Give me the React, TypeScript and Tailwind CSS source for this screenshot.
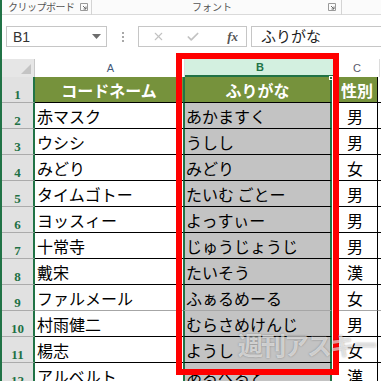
import { Check, X } from 'lucide-react';

type Row = { n: number; a: string; b: string; c: string; head?: boolean; softLine?: boolean };

const ROWS: Row[] = [
  { n: 1, a: 'コードネーム', b: 'ふりがな', c: '性別', head: true },
  { n: 2, a: '赤マスク', b: 'あかますく', c: '男' },
  { n: 3, a: 'ウシシ', b: 'うしし', c: '男' },
  { n: 4, a: 'みどり', b: 'みどり', c: '女' },
  { n: 5, a: 'タイムゴトー', b: 'たいむ ごとー', c: '男' },
  { n: 6, a: 'ヨッスィー', b: 'よっすぃー', c: '男' },
  { n: 7, a: '十常寺', b: 'じゅうじょうじ', c: '男' },
  { n: 8, a: '戴宋', b: 'たいそう', c: '漢' },
  { n: 9, a: 'ファルメール', b: 'ふぁるめーる', c: '女', softLine: true },
  { n: 10, a: '村雨健二', b: 'むらさめけんじ', c: '男' },
  { n: 11, a: '楊志', b: 'ようし', c: '女' },
  { n: 12, a: 'アルベルト', b: 'あるべると', c: '漢' },
];

const jp = "font-['Noto_Sans_CJK_JP','Noto_Sans',sans-serif]";

function Launcher() {
  return (
    <svg width="8" height="8" viewBox="0 0 8 8" className="shrink-0">
      <path d="M0.5 0.5h7v7h-7z" fill="none" stroke="#9a9a9a" />
      <path d="M3 3l3 3M6 3.5V6H3.5" fill="none" stroke="#6a6a6a" />
    </svg>
  );
}

function GridRow({ row }: { row: Row }) {
  const line = row.softLine ? 'border-[#a6a6a6]' : 'border-black';
  const cellBase = `h-[26px] border-b ${line} flex items-center text-[16px] leading-none whitespace-nowrap ${jp}`;
  return (
    <div className="flex">
      <div className="w-[33px] h-[26px] shrink-0 bg-[#e1e1e1] border-r-2 border-r-[#217346] border-b border-b-[#ababab] flex items-end justify-center pb-[1px]">
        <span className="font-['Liberation_Serif',serif] font-bold text-[13px] leading-none text-[#1e7145]">{row.n}</span>
      </div>
      <div
        className={`${cellBase} w-[148px] shrink-0 ${
          row.head ? 'bg-[#76923c] text-white font-bold justify-center' : 'bg-white text-black pl-[2px]'
        }`}
      >
        {row.a}
      </div>
      <div className="w-[150px] shrink-0 pr-[1px] bg-white">
        <div
          className={`${cellBase} relative border-x-2 border-x-[#217346] ${
            row.head ? 'bg-[#76923c] text-white font-bold justify-center' : 'bg-[#c3c3c3] text-black pl-[1px]'
          }`}
        >
          {row.b}
          {row.head && (
            <span className="absolute -right-[3px] -top-[1px] w-[4px] h-[4px] bg-[#217346] border border-white" />
          )}
        </div>
      </div>
      <div
        className={`${cellBase} w-[45px] shrink-0 border-r border-r-black justify-center overflow-hidden ${
          row.head ? 'bg-[#76923c] text-white font-bold pl-[4px]' : 'bg-white text-black'
        }`}
      >
        {row.c}
      </div>
      <div className={`${cellBase} flex-1 bg-white`} />
    </div>
  );
}

export default function App() {
  return (
    <div className="relative w-[381px] h-[381px] overflow-hidden bg-white border-l-2 border-[#217346] font-['Liberation_Sans',sans-serif]">
      {/* ribbon group labels */}
      <div className={`h-[15px] flex items-center border-b border-[#dadada] bg-[#fbfbfb] text-[10px] text-[#555] ${jp}`}>
        <div className="w-[89px] flex items-center justify-between pl-[6px] pr-[3px]">
          <span className="leading-none whitespace-nowrap tracking-[-0.5px]">クリップボード</span>
          <Launcher />
        </div>
        <div className="w-px h-[15px] bg-[#d4d4d4]" />
        <div className="w-[249px] flex items-center pr-[5px]">
          <span className="flex-1 text-center leading-none whitespace-nowrap pl-[4px]">フォント</span>
          <Launcher />
        </div>
        <div className="w-px h-[15px] bg-[#d4d4d4]" />
      </div>

      {/* formula bar */}
      <div className="flex items-center h-[21px] mt-[11px] pl-[4px]">
        <div className="w-[101px] h-[21px] border border-[#c6c6c6] flex items-center justify-between pl-[6px] pr-[5px]">
          <span className="text-[14px] text-[#333] leading-none">B1</span>
          <svg width="9" height="5" viewBox="0 0 9 5">
            <path d="M0 0h9L4.5 5z" fill="#6d6d6d" />
          </svg>
        </div>
        <div className="w-[31px] flex flex-col items-center gap-[2px]">
          <span className="w-[2px] h-[2px] bg-[#a8a8a8]" />
          <span className="w-[2px] h-[2px] bg-[#a8a8a8]" />
          <span className="w-[2px] h-[2px] bg-[#a8a8a8]" />
        </div>
        <div className="w-[109px] h-[21px] border border-[#c6c6c6] flex items-center pl-[13px] pr-[8px]">
          <X className="w-[13px] h-[13px] text-[#c2c2c2]" strokeWidth={2} />
          <Check className="w-[14px] h-[14px] text-[#c2c2c2] ml-[21px]" strokeWidth={3} />
          <span className="ml-auto font-['Liberation_Serif',serif] italic font-bold text-[13px] text-[#555] leading-none">fx</span>
        </div>
        <div className={`flex-1 ml-[4px] h-[21px] border border-[#c6c6c6] border-r-0 flex items-center pl-[9px] text-[15px] text-[#222] ${jp}`}>
          ふりがな
        </div>
      </div>

      {/* column headers */}
      <div className="flex mt-[12px] h-[18px]">
        <div className="w-[33px] shrink-0 bg-[#e6e6e6] border-r border-[#c8c8c8] relative">
          <svg width="10" height="10" viewBox="0 0 10 10" className="absolute right-[3px] bottom-[3px]">
            <path d="M10 0v10H0z" fill="#c4c4c4" />
          </svg>
        </div>
        <div className="w-[2px] shrink-0 bg-white" />
        <div className="w-[148px] shrink-0 flex items-center justify-center text-[11px] text-[#445a7a] border-r border-[#dcdcdc]">
          A
        </div>
        <div className="w-[150px] shrink-0 bg-[#d3f0e0] border-b-2 border-[#217346] flex items-center justify-center text-[11px] font-bold text-[#217346]">
          B
        </div>
        <div className="w-[45px] shrink-0 flex items-center justify-center text-[11px] text-[#5a5a6a] border-r border-[#dcdcdc]">
          C
        </div>
        <div className="flex-1" />
      </div>

      {/* grid */}
      <div className="flex flex-col">
        {ROWS.map((row) => (
          <GridRow key={row.n} row={row} />
        ))}
      </div>

      {/* highlight frame */}
      <div className="absolute left-[174px] top-[53px] w-[163px] h-[322px] border-[6px] border-[#ff0000] pointer-events-none" />

      {/* watermark */}
      <div
        className={`absolute left-[236px] top-[332px] text-[25px] font-bold tracking-[-2px] leading-none text-white/60 [text-shadow:0_0_2px_rgba(0,0,0,0.35)] ${jp}`}
      >
        週刊アスキー
      </div>
    </div>
  );
}
